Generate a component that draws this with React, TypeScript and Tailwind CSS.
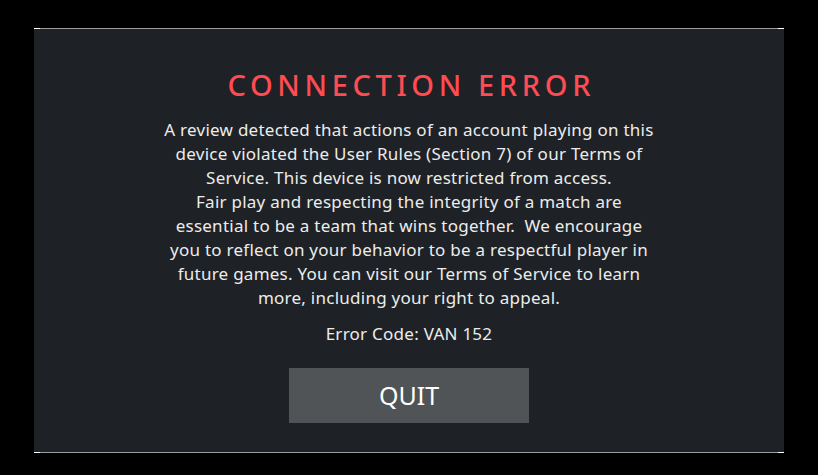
export default function App() {
  return (
    <div className="w-[818px] h-[475px] bg-black pt-[28px] pl-[34px] font-['Noto_Sans',sans-serif]">
      <div className="relative w-[750px] h-[425px] bg-[#1e2226] border-y border-[#9c9c9c] flex flex-col items-center">
        {/* white corner ticks */}
        <div className="absolute -top-px left-0 w-[6px] h-px bg-white" />
        <div className="absolute -top-px right-0 w-[6px] h-px bg-white" />
        <div className="absolute -bottom-px left-0 w-[6px] h-px bg-white" />
        <div className="absolute -bottom-px right-0 w-[6px] h-px bg-white" />

        <h1 className="mt-[38px] text-[29px] leading-[36px] tracking-[0.16em] text-[#ff4b52] font-medium pl-[0.16em]">
          CONNECTION ERROR
        </h1>
        <p className="mt-[15px] text-center text-[17px] leading-[24px] tracking-[0.015em] text-[#ececec] whitespace-nowrap">
          A review detected that actions of an account playing on this
          <br />
          device violated the User Rules (Section 7) of our Terms of
          <br />
          Service. This device is now restricted from access.
          <br />
          Fair play and respecting the integrity of a match are
          <br />
          essential to be a team that wins together.&nbsp; We encourage
          <br />
          you to reflect on your behavior to be a respectful player in
          <br />
          future games. You can visit our Terms of Service to learn
          <br />
          more, including your right to appeal.
        </p>
        <div className="mt-[12px] text-[17px] leading-[24px] tracking-[0.015em] text-[#ececec]">Error Code: VAN 152</div>
        <button type="button" className="mt-[22px] w-[240px] h-[55px] bg-[#505457] text-white text-[25px]">
          QUIT
        </button>
      </div>
    </div>
  );
}
